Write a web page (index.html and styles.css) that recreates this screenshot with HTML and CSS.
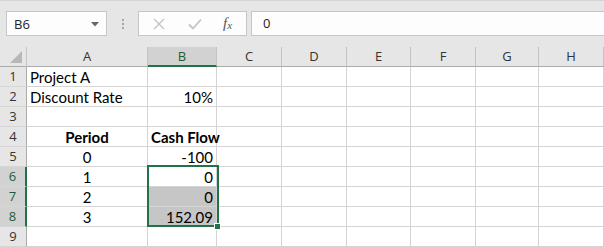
FILE: index.html
```html
<!DOCTYPE html>
<html>
<head>
<meta charset="utf-8">
<link rel="stylesheet" href="styles.css">
</head>
<body>
<div class="app">
  <div class="toolbar">
    <div class="namebox">
      <span class="namebox-text">B6</span>
      <svg class="dropdown" width="8" height="5" viewBox="0 0 8 5"><path d="M0 0 H8 L4 4.5 Z" fill="#666"/></svg>
    </div>
    <div class="grip"><i></i><i></i><i></i></div>
    <div class="fxbox">
      <svg class="fx-icon" width="12" height="12" viewBox="0 0 12 12"><path d="M1 1 L11 11 M11 1 L1 11" stroke="#c4c4c4" stroke-width="1.4" fill="none"/></svg>
      <svg class="fx-icon" width="14" height="12" viewBox="0 0 14 12"><path d="M1 6.5 L5 10.5 L13 1.5" stroke="#c4c4c4" stroke-width="1.8" fill="none"/></svg>
      <span class="fx-label">f<sub>x</sub></span>
    </div>
    <div class="formula">0</div>
  </div>

  <div class="sheet">
    <div class="corner"><svg width="12" height="12" viewBox="0 0 12 12"><path d="M12 0 V12 H0 Z" fill="#b7b7b7"/></svg></div>
    <div class="colhead">A</div>
    <div class="colhead active">B</div>
    <div class="colhead">C</div>
    <div class="colhead">D</div>
    <div class="colhead">E</div>
    <div class="colhead">F</div>
    <div class="colhead">G</div>
    <div class="colhead">H</div>

    <div class="rowhead">1</div>
    <div class="cell">Project A</div><div class="cell"></div><div class="cell"></div><div class="cell"></div><div class="cell"></div><div class="cell"></div><div class="cell"></div><div class="cell"></div>

    <div class="rowhead">2</div>
    <div class="cell">Discount Rate</div><div class="cell right">10%</div><div class="cell"></div><div class="cell"></div><div class="cell"></div><div class="cell"></div><div class="cell"></div><div class="cell"></div>

    <div class="rowhead">3</div>
    <div class="cell"></div><div class="cell"></div><div class="cell"></div><div class="cell"></div><div class="cell"></div><div class="cell"></div><div class="cell"></div><div class="cell"></div>

    <div class="rowhead">4</div>
    <div class="cell center bold">Period</div><div class="cell center bold">Cash Flow</div><div class="cell"></div><div class="cell"></div><div class="cell"></div><div class="cell"></div><div class="cell"></div><div class="cell"></div>

    <div class="rowhead">5</div>
    <div class="cell center">0</div><div class="cell right">-100</div><div class="cell"></div><div class="cell"></div><div class="cell"></div><div class="cell"></div><div class="cell"></div><div class="cell"></div>

    <div class="rowhead active">6</div>
    <div class="cell center">1</div><div class="cell right">0</div><div class="cell"></div><div class="cell"></div><div class="cell"></div><div class="cell"></div><div class="cell"></div><div class="cell"></div>

    <div class="rowhead active">7</div>
    <div class="cell center">2</div><div class="cell right shaded">0</div><div class="cell"></div><div class="cell"></div><div class="cell"></div><div class="cell"></div><div class="cell"></div><div class="cell"></div>

    <div class="rowhead active">8</div>
    <div class="cell center">3</div><div class="cell right shaded">152.09</div><div class="cell"></div><div class="cell"></div><div class="cell"></div><div class="cell"></div><div class="cell"></div><div class="cell"></div>

    <div class="rowhead">9</div>
    <div class="cell"></div><div class="cell"></div><div class="cell"></div><div class="cell"></div><div class="cell"></div><div class="cell"></div><div class="cell"></div><div class="cell"></div>

    <div class="rowhead"></div>
    <div class="cell"></div><div class="cell"></div><div class="cell"></div><div class="cell"></div><div class="cell"></div><div class="cell"></div><div class="cell"></div><div class="cell"></div>

    <div class="selection"><div class="handle"></div></div>
  </div>
</div>
</body>
</html>
```

FILE: styles.css
```css
* { box-sizing: border-box; }
html, body { margin: 0; padding: 0; background: #ffffff; overflow: hidden; }
.app {
  width: 604px;
  height: 247px;
  overflow: hidden;
  background: #e6e6e6;
}
.toolbar {
  height: 47px;
  border-top: 1px solid #d4d4d4;
  padding-top: 10px;
  display: flex;
  align-items: flex-start;
  font-family: "Open Sans", "Noto Sans", sans-serif;
}
.namebox {
  margin-left: 6px;
  width: 101px;
  height: 25px;
  background: #fdfdfd;
  border: 1px solid #c6c6c6;
  display: flex;
  align-items: center;
  justify-content: space-between;
  padding: 0 7px 0 7px;
}
.namebox-text { font-size: 13px; color: #222; }
.dropdown { margin-top: 1px; }
.grip {
  width: 31px;
  height: 25px;
  display: flex;
  flex-direction: column;
  align-items: center;
  justify-content: center;
  gap: 2px;
}
.grip i { display: block; width: 2px; height: 2px; background: #a6a6a6; }
.fxbox {
  width: 109px;
  height: 25px;
  background: #fdfdfd;
  border: 1px solid #c6c6c6;
  display: flex;
  align-items: center;
  padding-left: 14px;
  gap: 0;
}
.fxbox svg:nth-child(1) { margin-right: 23px; }
.fxbox svg:nth-child(2) { margin-right: 21px; }
.fx-label {
  font-family: "Liberation Serif", serif;
  font-style: italic;
  font-size: 15px;
  color: #555;
  line-height: 1;
}
.fx-label sub { font-size: 11px; vertical-align: -1px; }
.formula {
  margin-left: 4px;
  flex: 1;
  height: 25px;
  background: #fdfdfd;
  border: 1px solid #c6c6c6;
  border-right: none;
  font-size: 13px;
  color: #222;
  padding-left: 11px;
  line-height: 23px;
}

.sheet {
  position: relative;
  display: grid;
  grid-template-columns: 27px 121px 69px 65px 65px 64px 65px 63px 65px;
  grid-auto-rows: 20px;
  background: #ffffff;
}
.corner {
  background: #e6e6e6;
  border-bottom: 1px solid #ababab;
  border-right: 1px solid #c6c6c6;
  display: flex;
  align-items: flex-end;
  justify-content: flex-end;
  padding: 0 4px 3px 0;
}
.colhead {
  background: #e6e6e6;
  border-bottom: 1px solid #ababab;
  border-right: 1px solid #c2c2c2;
  text-align: center;
  font-family: "Open Sans", "Noto Sans", sans-serif;
  font-size: 13px;
  line-height: 19px;
  color: #333;
}
.colhead.active {
  background: #d2d2d2;
  border-bottom: 2px solid #217346;
  color: #1d5c38;
}
.rowhead {
  background: #e6e6e6;
  border-bottom: 1px solid #d6d6d6;
  border-right: 1px solid #ababab;
  text-align: center;
  font-family: "Open Sans", "Noto Sans", sans-serif;
  font-size: 13px;
  line-height: 19px;
  color: #333;
}
.rowhead.active {
  background: #d2d2d2;
  border-right: 2px solid #217346;
  color: #1d5c38;
}
.cell {
  border-bottom: 1px solid #d4d4d4;
  border-right: 1px solid #d4d4d4;
  font-family: "Lato", "Liberation Sans", sans-serif;
  font-size: 15px;
  line-height: 20px;
  color: #000;
  padding: 0 3px;
  white-space: nowrap;
  overflow: visible;
}
.cell.right { text-align: right; }
.cell.center { text-align: center; }
.cell.bold { font-weight: bold; }
.cell.shaded { background: #c6c6c6; }
.selection {
  position: absolute;
  left: 147px;
  top: 118px;
  width: 72px;
  height: 62px;
  border: 2px solid #217346;
  pointer-events: none;
}
.handle {
  position: absolute;
  right: -4px;
  bottom: -5px;
  width: 7px;
  height: 7px;
  background: #217346;
  border: 1px solid #ffffff;
}
```
